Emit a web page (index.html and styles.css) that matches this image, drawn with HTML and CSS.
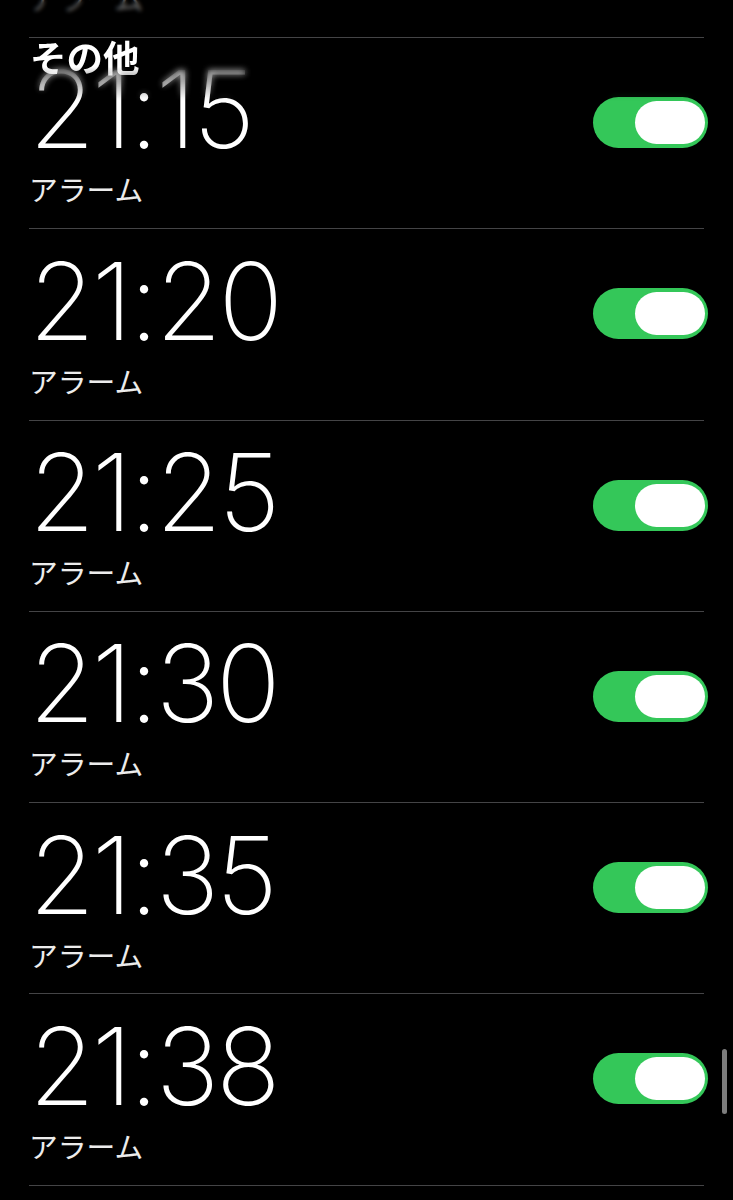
FILE: index.html
```html
<!DOCTYPE html>
<html lang="ja">
<head>
<meta charset="utf-8">
<title>アラーム</title>
<link rel="stylesheet" href="styles.css">
</head>
<body>
<div class="screen">
  <div class="list">
    <div class="row">
      <div class="info"><div class="time">21:10</div><div class="label">アラーム</div></div>
      <div class="toggle"><div class="knob"></div></div>
    </div>
    <div class="row">
      <div class="info"><div class="time">21:15</div><div class="label">アラーム</div></div>
      <div class="toggle"><div class="knob"></div></div>
    </div>
    <div class="row">
      <div class="info"><div class="time">21:20</div><div class="label">アラーム</div></div>
      <div class="toggle"><div class="knob"></div></div>
    </div>
    <div class="row">
      <div class="info"><div class="time">21:25</div><div class="label">アラーム</div></div>
      <div class="toggle"><div class="knob"></div></div>
    </div>
    <div class="row">
      <div class="info"><div class="time">21:30</div><div class="label">アラーム</div></div>
      <div class="toggle"><div class="knob"></div></div>
    </div>
    <div class="row">
      <div class="info"><div class="time">21:35</div><div class="label">アラーム</div></div>
      <div class="toggle"><div class="knob"></div></div>
    </div>
    <div class="row">
      <div class="info"><div class="time">21:38</div><div class="label">アラーム</div></div>
      <div class="toggle"><div class="knob"></div></div>
    </div>
  </div>
  <div class="topbar"></div>
  <div class="section-header"><span class="section-title">その他</span></div>
  <div class="scrollbar"></div>
</div>
</body>
</html>
```
FILE: styles.css
```css
html, body {
  margin: 0;
  padding: 0;
  background: #000;
}
.screen {
  position: relative;
  width: 733px;
  height: 1200px;
  overflow: hidden;
  background: #000;
  color: #fff;
}
.list {
  margin: -153.3px 29px 0 29px;
}
.row {
  display: flex;
  justify-content: space-between;
  height: 190.3px;
  border-bottom: 1px solid #444446;
}
.info {
  display: flex;
  flex-direction: column;
  padding-top: 18.4px;
}
.time {
  font-family: "Inter", "Liberation Sans", sans-serif;
  font-weight: 200;
  font-size: 107px;
  line-height: 1;
  letter-spacing: -3.2px;
  color: #fff;
}
.label {
  margin-top: 12px;
  font-family: "Noto Sans CJK JP", sans-serif;
  font-size: 28.8px;
  line-height: 1;
  color: #ececec;
}
.toggle {
  position: relative;
  margin-top: 59px;
  margin-right: -4px;
  width: 115px;
  height: 51px;
  border-radius: 26px;
  background: #34c759;
  flex-shrink: 0;
}
.knob {
  position: absolute;
  right: 3px;
  top: 4px;
  width: 70px;
  height: 43px;
  border-radius: 22px;
  background: #fff;
}
.topbar {
  position: absolute;
  left: 0;
  top: 0;
  width: 733px;
  height: 37px;
  background: rgba(0, 0, 0, 0.55);
  backdrop-filter: blur(2px);
}
.section-header {
  position: absolute;
  left: 0;
  top: 39px;
  width: 733px;
  height: 62px;
  backdrop-filter: blur(3px);
  background: linear-gradient(to bottom, rgba(0,0,0,0.55), rgba(0,0,0,0));
  -webkit-mask-image: linear-gradient(to bottom, #000 45%, transparent);
  mask-image: linear-gradient(to bottom, #000 45%, transparent);
}
.section-title {
  position: absolute;
  left: 30px;
  top: 0;
  font-family: "Noto Sans CJK JP", sans-serif;
  font-weight: 700;
  font-size: 36.5px;
  line-height: 1;
  color: #fff;
}
.scrollbar {
  position: absolute;
  left: 722px;
  top: 1049px;
  width: 5px;
  height: 65px;
  border-radius: 3px;
  background: #7d7d7d;
}
```
